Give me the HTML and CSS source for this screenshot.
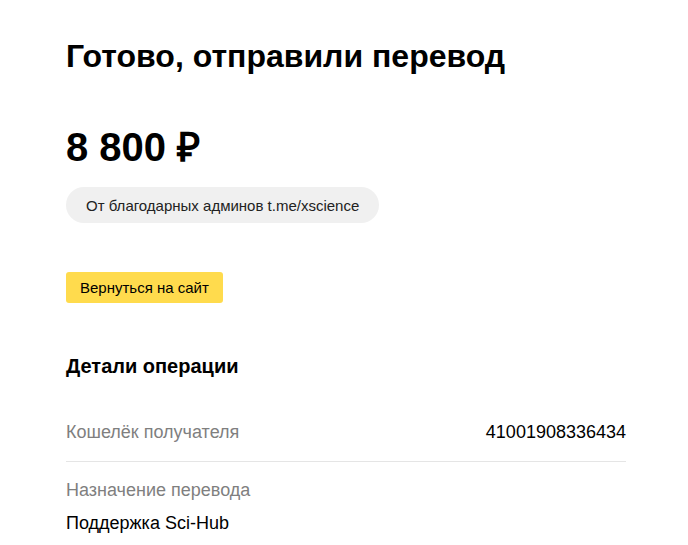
FILE: index.html
```html
<!DOCTYPE html>
<html lang="ru">
<head>
<meta charset="utf-8">
<link rel="stylesheet" href="styles.css">
</head>
<body>
<main class="page">
  <h1 class="title">Готово, отправили перевод</h1>
  <div class="amount">8 800 ₽</div>
  <div class="comment">От благодарных админов t.me/xscience</div>
  <button class="back-btn">Вернуться на сайт</button>
  <h2 class="details-title">Детали операции</h2>
  <div class="row row--split">
    <span class="label">Кошелёк получателя</span>
    <span class="value">41001908336434</span>
  </div>
  <div class="row row--stack">
    <span class="label">Назначение перевода</span>
    <span class="value">Поддержка Sci-Hub</span>
  </div>
</main>
</body>
</html>
```
FILE: styles.css
```css
* { box-sizing: border-box; }
html, body { margin: 0; padding: 0; background: #fff; }
body { font-family: "Liberation Sans", Arial, sans-serif; color: #000; }
.page {
  width: 560px;
  margin-left: 66px;
  padding-top: 36px;
  display: flex;
  flex-direction: column;
  align-items: flex-start;
}
.title {
  margin: 0;
  font-size: 32px;
  line-height: 40px;
  font-weight: 700;
}
.amount {
  margin-top: 47px;
  font-size: 40px;
  line-height: 48px;
  font-weight: 700;
}
.comment {
  margin-top: 16px;
  background: #f0f0f0;
  border-radius: 18px;
  height: 36px;
  padding: 0 20px;
  display: flex;
  align-items: center;
  font-size: 15px;
  color: #222;
}
.back-btn {
  margin-top: 49px;
  height: 31px;
  padding: 0 14px;
  background: #ffdb4d;
  border: none;
  border-radius: 3px;
  font-family: inherit;
  font-size: 15px;
  color: #000;
}
.details-title {
  margin: 51px 0 0;
  font-size: 20px;
  line-height: 24px;
  font-weight: 700;
}
.row { width: 100%; font-size: 18px; line-height: 22px; }
.row--split {
  margin-top: 43px;
  display: flex;
  justify-content: space-between;
  padding-bottom: 18px;
  border-bottom: 1px solid #e5e5e5;
}
.row--stack {
  padding-top: 17px;
  display: flex;
  flex-direction: column;
  gap: 11px;
}
.label { color: #7f7f7f; }
.value { color: #000; }
```
